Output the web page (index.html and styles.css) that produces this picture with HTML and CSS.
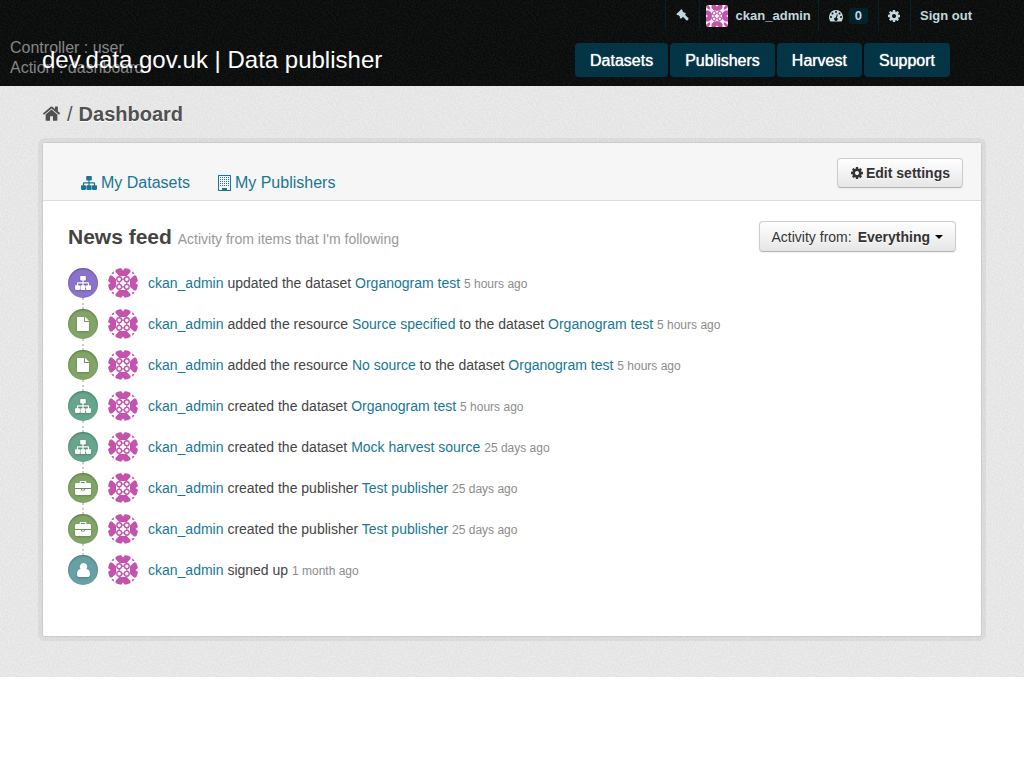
FILE: index.html
```html
<!DOCTYPE html>
<html lang="en">
<head>
<meta charset="utf-8">
<meta name="viewport" content="width=device-width, initial-scale=1">
<title>Dashboard - dev.data.gov.uk | Data publisher</title>
<link rel="stylesheet" href="styles.css">
</head>
<body>
<svg class="sprite" aria-hidden="true">
  <symbol id="home" viewBox="90 250 1612 1400"><path d="M1408 992v480q0 26-19 45t-45 19h-320v-384h-256v384h-320q-26 0-45-19t-19-45v-480q0-1 .5-3t.5-3l511-426 511 426q1 2 1 6zm223-69l-62 74q-8 9-21 11h-3q-13 0-21-7l-628-523-628 523q-12 8-24 7-13-2-21-11l-62-74q-8-10-7-23.500t11-21.500l663-552q32-26 76-26t76 26l220 184v-176q0-14 9-23t23-9h192q14 0 23 9t9 23v373l164 136q10 8 11 21.500t-7 23.500z"/></symbol>
  <symbol id="cog" viewBox="0 0 1792 1792"><path d="M1152 896q0-106-75-181t-181-75-181 75-75 181 75 181 181 75 181-75 75-181zm512-109v222q0 12-8 23t-20 13l-185 28q-19 54-39 91 35 50 107 138 10 12 10 25t-9 23q-27 37-99 108t-94 71q-12 0-26-9l-138-108q-44 23-91 38-16 136-29 186-7 28-36 28h-222q-14 0-24.500-8.500t-11.500-21.500l-28-184q-49-16-90-37l-141 107q-10 9-25 9-14 0-25-11-126-114-165-168-7-10-7-23 0-12 8-23 15-21 51-66.500t54-70.500q-27-50-41-99l-183-27q-13-2-21-12.500t-8-23.500v-222q0-12 8-23t19-13l186-28q14-46 39-92-40-57-107-138-10-12-10-24 0-10 9-23 26-36 98.500-107.500t94.500-71.500q13 0 26 10l138 107q44-23 91-38 16-136 29-186 7-28 36-28h222q14 0 24.500 8.500t11.500 21.500l28 184q49 16 90 37l142-107q9-9 24-9 13 0 25 10 129 119 165 170 7 8 7 22 0 12-8 23-15 21-51 66.500t-54 70.500q26 50 41 98l183 28q13 2 21 12.500t8 23.500z"/></symbol>
  <symbol id="sitemap" viewBox="0 0 16 16"><path d="M6 1h4a.8.8 0 0 1 .8.800v3a.8.8 0 0 1-.8.800H8.600v1.700h4.500a1 1 0 0 1 1 1v2h1.100a.8.8 0 0 1 .8.800v3a.8.8 0 0 1-.8.800h-3.400a.8.8 0 0 1-.8-.8v-3a.8.8 0 0 1 .8-.8h1.100V8.500H8.600v1.800h1.200a.8.8 0 0 1 .8.800v3a.8.8 0 0 1-.8.800H6.200a.8.8 0 0 1-.8-.8v-3a.8.8 0 0 1 .8-.8h1.200V8.500H3.100v1.800h1.100a.8.8 0 0 1 .8.800v3a.8.8 0 0 1-.8.800H.8a.8.8 0 0 1-.8-.8v-3a.8.8 0 0 1 .8-.8h1.100v-2a1 1 0 0 1 1-1h4.500V5.600H6a.8.8 0 0 1-.8-.8v-3A.8.8 0 0 1 6 1z"/></symbol>
  <symbol id="gavel" viewBox="0 0 14 14"><path d="M.8 5.200 5.400.6q.5-.4 1 0l.7.700-.3.900 1.900 1.900.9-.3.800.8q.3.500 0 .9l-.7.700 3.700 3.700q.5.600 0 1.200l-1 1q-.6.500-1.200 0L7.500 8.400l-1.700 1.700q-.5.400-1 0l-.8-.8.300-.9-1.900-1.900-.9.300-.7-.7q-.4-.5 0-.9z"/></symbol>
  <symbol id="gauge" viewBox="0 0 14 12"><path fill-rule="evenodd" d="M7 0a7 7 0 0 1 7 7q0 2.200-1.100 4-.3.500-.8.500H1.900q-.5 0-.8-.5Q0 9.200 0 7a7 7 0 0 1 7-7zM2 6a1 1 0 1 0 0 2 1 1 0 0 0 0-2zm1.500-3.500a1 1 0 1 0 0 2 1 1 0 0 0 0-2zM7 1a1 1 0 1 0 0 2 1 1 0 0 0 0-2zm5 5a1 1 0 1 0 0 2 1 1 0 0 0 0-2zm-1.500-3.500a1 1 0 1 0 0 2 1 1 0 0 0 0-2zM7.800 4.300l-.9 3.200a1.700 1.700 0 1 0 1 .3l.9-3.300z"/></symbol>
  <symbol id="building" viewBox="0 0 13 16"><path fill-rule="evenodd" d="M.5 0h12a.5.500 0 0 1 .5.500v15a.5.500 0 0 1-.5.500H.5a.5.500 0 0 1-.5-.5V.5A.5.500 0 0 1 .5 0zM1 1v14h3v-2h5v2h3V1z"/><path d="M2 2.500h9M2 4.500h9M2 6.500h9M2 8.500h9M2 10.500h9" fill="none" stroke="currentColor" stroke-width="1" stroke-dasharray="1 1"/></symbol>
  <symbol id="file" viewBox="0 0 12 14"><path d="M.7 0H7v4.300q0 .7.700.7H12v8.300q0 .7-.7.700H.7q-.7 0-.7-.7V.7Q0 0 .7 0zM8 0q.4.200.8.500l2.700 2.700q.3.400.5.800H8z"/></symbol>
  <symbol id="briefcase" viewBox="0 0 16 14"><path fill-rule="evenodd" d="M5.500 0h5q.9 0 .9.900V2h3.200Q16 2 16 3.400V7H0V3.400Q0 2 1.400 2h3.200V.9q0-.9.900-.9zm.3 1.100V2h4.400v-.9zM0 8h6v1q0 .6.600.6h2.800q.6 0 .6-.6V8h6v4.600q0 1.400-1.400 1.400H1.400Q0 14 0 12.600zm7 0h2v.8H7z"/></symbol>
  <symbol id="user" viewBox="0 0 13 14"><path d="M6.500 0a3.700 3.700 0 0 1 3 5.900Q13 6.300 13 11.200 13 14 10.500 14h-8Q0 14 0 11.200 0 6.300 3.500 5.900A3.700 3.700 0 0 1 6.500 0z"/></symbol>
  <symbol id="identicon" viewBox="0 0 30 30">
    <path fill="#fff" d="M0 0h30v30H0z"/>
    <g fill="#c353ad">
      <path d="M7.500 0H13l2 2.500L17 0h5.500v4L18.800 8h-7.600L7.500 4zM7.500 30H13l2-2.500 2 2.500h5.500v-4l-3.700-4h-7.600l-3.700 4zM0 7.500V13l2.500 2L0 17v5.500h4l4-3.700v-7.600L4 7.500zM30 7.500V13l-2.500 2 2.500 2v5.500h-4l-4-3.700v-7.600l4-3.700z"/>
      <path d="M0 0h3L6 4 5.500 6 4 6 0 3zM30 0h-3l-3 4 .5 2H26l4-3zM0 30h3l3-4-.5-2H4l-4 3zM30 30h-3l-3-4 .5-2H26l4 3z"/>
    </g>
    <g fill="#fff" stroke="#c353ad" stroke-width="1.400"><circle cx="11.200" cy="11.200" r="2.400"/><circle cx="18.800" cy="11.200" r="2.400"/><circle cx="11.200" cy="18.800" r="2.400"/><circle cx="18.800" cy="18.800" r="2.400"/></g>
    <path d="M13.600 11.200h2.800M13.600 18.800h2.800M11.200 13.600v2.800M18.800 13.600v2.800" stroke="#c353ad" stroke-width="1.200"/>
  </symbol>
</svg>

<header class="masthead">
  <div class="debug">Controller : user<br>Action : dashboard</div>
  <div class="container">
    <ul class="account">
      <li><a class="admin" href="#" aria-label="Sysadmin settings"><svg class="icon-13"><use href="#gavel"/></svg></a></li>
      <li><a class="profile" href="#"><svg class="avatar-small"><use href="#identicon"/></svg><span>ckan_admin</span></a></li>
      <li><a class="notify" href="#" aria-label="Dashboard, 0 new items"><svg class="gauge"><use href="#gauge"/></svg><span class="badge">0</span></a></li>
      <li><a class="prefs" href="#" aria-label="Settings"><svg class="icon-14"><use href="#cog"/></svg></a></li>
      <li><a class="signout" href="#">Sign out</a></li>
    </ul>
    <div class="brand-row">
      <a class="brand" href="#">dev.data.gov.uk | Data publisher</a>
      <nav class="nav"><a href="#">Datasets</a><a href="#">Publishers</a><a href="#">Harvest</a><a href="#">Support</a></nav>
    </div>
  </div>
</header>

<main class="main">
  <div class="container">
    <nav class="breadcrumb" aria-label="Breadcrumb"><a href="#" aria-label="Home"><svg class="home"><use href="#home"/></svg></a><span class="slash">/</span><a href="#">Dashboard</a></nav>
    <div class="wrapper">
      <div class="page-header">
        <nav class="tabs">
          <a href="#"><svg class="icon-16"><use href="#sitemap"/></svg>My Datasets</a>
          <a href="#"><svg class="building"><use href="#building"/></svg>My Publishers</a>
        </nav>
        <a class="btn edit" href="#"><svg class="icon-14"><use href="#cog"/></svg>Edit settings</a>
      </div>
      <section class="content">
        <div class="feed-head">
          <h1>News feed <small>Activity from items that I'm following</small></h1>
          <button class="btn filter" type="button"><span>Activity from:</span><strong>Everything</strong><i class="caret"></i></button>
        </div>
        <ul class="feed">
          <li><span class="badge-icon purple"><svg class="icon-16"><use href="#sitemap"/></svg></span><svg class="avatar"><use href="#identicon"/></svg><p><a href="#">ckan_admin</a> updated the dataset <a href="#">Organogram test</a> <time>5 hours ago</time></p></li>
          <li><span class="badge-icon green"><svg class="file"><use href="#file"/></svg></span><svg class="avatar"><use href="#identicon"/></svg><p><a href="#">ckan_admin</a> added the resource <a href="#">Source specified</a> to the dataset <a href="#">Organogram test</a> <time>5 hours ago</time></p></li>
          <li><span class="badge-icon green"><svg class="file"><use href="#file"/></svg></span><svg class="avatar"><use href="#identicon"/></svg><p><a href="#">ckan_admin</a> added the resource <a href="#">No source</a> to the dataset <a href="#">Organogram test</a> <time>5 hours ago</time></p></li>
          <li><span class="badge-icon teal"><svg class="icon-16"><use href="#sitemap"/></svg></span><svg class="avatar"><use href="#identicon"/></svg><p><a href="#">ckan_admin</a> created the dataset <a href="#">Organogram test</a> <time>5 hours ago</time></p></li>
          <li><span class="badge-icon teal"><svg class="icon-16"><use href="#sitemap"/></svg></span><svg class="avatar"><use href="#identicon"/></svg><p><a href="#">ckan_admin</a> created the dataset <a href="#">Mock harvest source</a> <time>25 days ago</time></p></li>
          <li><span class="badge-icon green"><svg class="briefcase"><use href="#briefcase"/></svg></span><svg class="avatar"><use href="#identicon"/></svg><p><a href="#">ckan_admin</a> created the publisher <a href="#">Test publisher</a> <time>25 days ago</time></p></li>
          <li><span class="badge-icon green"><svg class="briefcase"><use href="#briefcase"/></svg></span><svg class="avatar"><use href="#identicon"/></svg><p><a href="#">ckan_admin</a> created the publisher <a href="#">Test publisher</a> <time>25 days ago</time></p></li>
          <li><span class="badge-icon cyan"><svg class="person"><use href="#user"/></svg></span><svg class="avatar"><use href="#identicon"/></svg><p><a href="#">ckan_admin</a> signed up <time>1 month ago</time></p></li>
        </ul>
      </section>
    </div>
  </div>
</main>
</body>
</html>
```

FILE: styles.css
```css
:root {
  --grain: url("data:image/svg+xml,%3Csvg xmlns='http://www.w3.org/2000/svg' width='100' height='100'%3E%3Cfilter id='n' x='0' y='0' width='100%25' height='100%25'%3E%3CfeTurbulence type='fractalNoise' baseFrequency='.6' numOctaves='2' stitchTiles='stitch'/%3E%3CfeColorMatrix values='0 0 0 0 1 0 0 0 0 1 0 0 0 0 1 3 0 0 0 -1.200'/%3E%3C/filter%3E%3Crect width='100' height='100' filter='url(%23n)' opacity='.3'/%3E%3C/svg%3E");
  --grain-dark: url("data:image/svg+xml,%3Csvg xmlns='http://www.w3.org/2000/svg' width='100' height='100'%3E%3Cfilter id='n' x='0' y='0' width='100%25' height='100%25'%3E%3CfeTurbulence type='fractalNoise' baseFrequency='.6' numOctaves='2' stitchTiles='stitch'/%3E%3CfeColorMatrix values='0 0 0 0 1 0 0 0 0 1 0 0 0 0 1 3 0 0 0 -1.200'/%3E%3C/filter%3E%3Crect width='100' height='100' filter='url(%23n)' opacity='.04'/%3E%3C/svg%3E");
}
* { box-sizing: border-box; }
body {
  margin: 0;
  background: #fff;
  color: #444;
  font: 14px/20px "Liberation Sans", Arial, sans-serif;
}
a { color: #187794; text-decoration: none; }
ul { list-style: none; margin: 0; padding: 0; }
svg { display: block; flex: none; fill: currentColor; }
.sprite { position: absolute; width: 0; height: 0; }
.container { max-width: 940px; margin: 0 auto; }
.icon-13 { width: 13px; height: 13px; }
.icon-14 { width: 14px; height: 14px; }
.icon-16 { width: 16px; height: 16px; }

.masthead {
  position: relative;
  padding-bottom: 9px;
  background: var(--grain-dark) #0a0c0c;
}
.debug {
  position: absolute;
  left: 10px;
  top: 38px;
  color: #868686;
  font-size: 16px;
}
.account { display: flex; justify-content: flex-end; }
.account li { border-left: 1px solid #04222b; }
.account a {
  display: flex;
  align-items: center;
  height: 31px;
  padding: 0 10px;
  color: #c0d8de;
  font-size: 13px;
  font-weight: bold;
}
.account .profile { padding: 0 7px 0 6px; gap: 8px; }
.account .notify { gap: 6px; }
.account .prefs { padding: 0 9px 0 8px; }
.account .signout { padding-left: 9px; }
.avatar-small { width: 22px; height: 22px; border-radius: 3px; }
.gauge { width: 14px; height: 12px; }
.badge {
  padding: 0 6px;
  border-radius: 3px;
  background: #04222b;
  line-height: 16px;
}
.brand-row {
  position: relative;
  display: flex;
  justify-content: space-between;
  align-items: center;
  padding: 12px 32px 0 0;
}
.brand { color: #fff; font-size: 24px; line-height: 32px; }
.nav { display: flex; gap: 2px; }
.nav a {
  padding: 8px 15px 6px;
  border-radius: 4px;
  background: #033546;
  color: #fff;
  font-size: 16px;
  text-shadow: 0 0 1px #fff;
}

.main {
  padding: 18px 0 40px;
  background: var(--grain) #e4e4e4;
}
.breadcrumb {
  display: flex;
  align-items: center;
  margin-bottom: 18px;
  color: #505050;
  font-size: 20px;
  text-shadow: 0 1px 0 #fff;
}
.breadcrumb a { color: #505050; font-weight: bold; }
.home { width: 19px; height: 16px; }
.slash { margin: 0 6px; }
.wrapper {
  border: 1px solid #ccc;
  border-radius: 3px;
  background: #fff;
  box-shadow: 0 0 0 4px rgba(0, 0, 0, .05);
}
.page-header {
  display: flex;
  justify-content: space-between;
  align-items: flex-start;
  padding: 15px 18px 7px 38px;
  border-bottom: 1px solid #ddd;
  background: #f6f6f6;
}
.tabs { display: flex; gap: 28px; padding-top: 15px; font-size: 16px; }
.tabs a { display: flex; align-items: center; gap: 4px; }
.building { width: 13px; height: 16px; }
.btn {
  display: flex;
  align-items: center;
  border: 1px solid #ccc;
  border-bottom-color: #b3b3b3;
  border-radius: 4px;
  background: linear-gradient(#fff, #e6e6e6);
  box-shadow: inset 0 1px 0 rgba(255, 255, 255, .2), 0 1px 2px rgba(0, 0, 0, .05);
  color: #333;
  font: 14px/20px "Liberation Sans", Arial, sans-serif;
  text-shadow: 0 1px 1px rgba(255, 255, 255, .75);
}
.edit { padding: 4px 12px; gap: 2px; font-weight: bold; }
.filter { padding: 5px 12px 4px; }
.filter strong { margin: 0 5px 0 6px; }
.caret { border: 4px solid transparent; border-top-color: #000; border-bottom: 0; }
.content { padding: 20px 25px 40px; }
.feed-head {
  display: flex;
  justify-content: space-between;
  align-items: center;
  margin-bottom: 16px;
}
h1 { margin: 0; padding-top: 2px; font-size: 21px; line-height: 26px; }
h1 small { color: #999; font-size: 14px; font-weight: normal; }
.feed li {
  position: relative;
  display: flex;
  align-items: center;
  gap: 10px;
  padding-bottom: 11px;
}
.feed li:not(:last-child)::after {
  content: "";
  position: absolute;
  left: 14px;
  bottom: 0;
  height: 11px;
  border-left: 2px dotted #ccc;
}
.feed p { margin: 0; }
.feed time { color: #8c8c8c; font-size: 12px; }
.badge-icon {
  display: grid;
  place-items: center;
  width: 30px;
  height: 30px;
  border-radius: 50%;
  box-shadow: inset 0 1px 2px rgba(0, 0, 0, .3);
  color: #fff;
}
.badge-icon svg { filter: drop-shadow(0 1px 1px rgba(0, 0, 0, .2)); }
.avatar { width: 30px; height: 30px; border-radius: 50%; }
.file { width: 12px; height: 14px; }
.briefcase { width: 16px; height: 14px; }
.person { width: 13px; height: 14px; }
.purple { background: #8b73cd; }
.green { background: #80a566; }
.teal { background: #67a58c; }
.cyan { background: #67a1a5; }
```
